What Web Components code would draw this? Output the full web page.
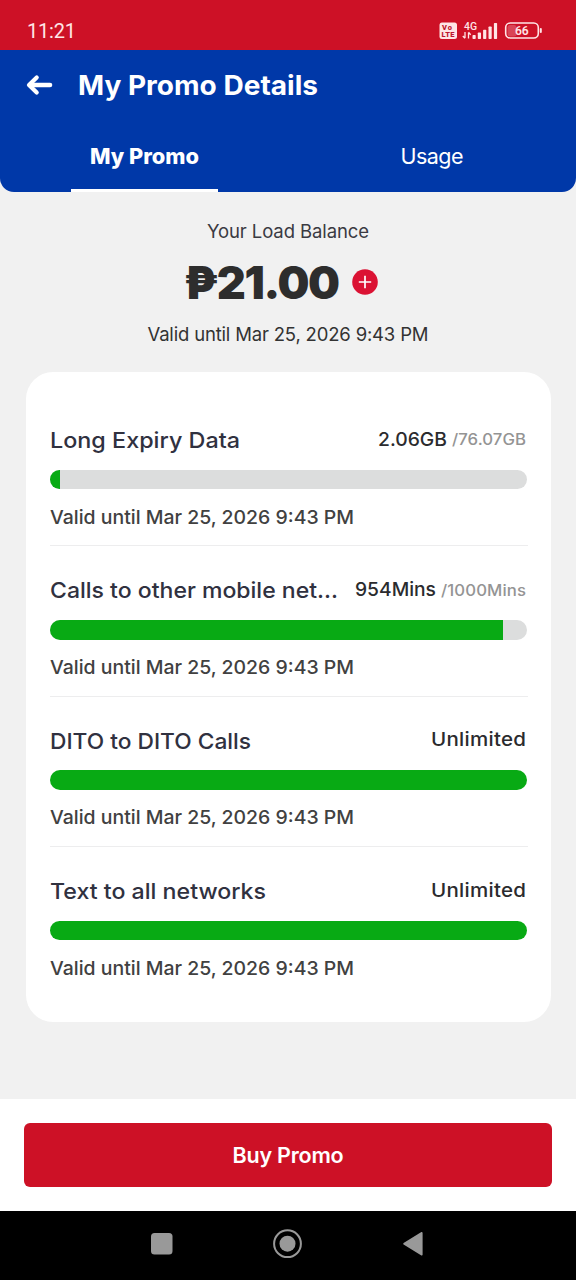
<!DOCTYPE html>
<html lang="en">
<head>
<meta charset="utf-8">
<title>My Promo Details</title>
<style>
html,body{margin:0;height:100%}
body{background:#f1f1f1;font-family:"Inter","Liberation Sans",sans-serif}
</style>
</head>
<body>
<promo-app></promo-app>
<script>
const define = (name, html, init) => customElements.define(name, class extends HTMLElement {
  connectedCallback() {
    if (this.shadowRoot) return;
    const t = document.createElement('template');
    t.innerHTML = typeof html === 'function' ? html(this) : html;
    this.attachShadow({mode: 'open'}).append(t.content.cloneNode(true));
    if (init) init(this);
  }
});

// Text label whose line fills the given width: glyphs widen by up to 8%, tracking takes the rest.
define('fit-text', `<style>
:host{display:block;flex:none;white-space:nowrap;line-height:1.2}
span{display:inline-block;transform-origin:0 50%}
</style><span></span>`, el => {
  const s = el.shadowRoot.querySelector('span');
  s.textContent = el.getAttribute('text');
  const target = +el.getAttribute('w');
  el.style.width = target + 'px';
  const n = s.textContent.length - 1;
  const natural = s.getBoundingClientRect().width;
  const k = Math.min(1.08, Math.max(1, target / natural));
  s.style.letterSpacing = (target / k - natural) / n + 'px';
  s.style.transform = `scaleX(${k})`;
});

define('status-bar', `<style>
:host{display:flex;height:50px;box-sizing:border-box;padding:12px 33px 0 27px;background:#cd1126;justify-content:space-between;color:#ffe5e6;font-family:Roboto,sans-serif}
fit-text{font-size:20px;line-height:39px}
svg{display:block;margin-top:7px}
</style>
<fit-text text="11:21" w="49"></fit-text>
<svg width="105" height="24" viewBox="438.5 19 105 24" fill="#ffe5e6" font-family="Roboto">
<rect x="440" y="22.5" width="17.5" height="16.5" rx="2.5"/>
<text x="442.5" y="30.2" font-size="7.5" font-weight="900" fill="#bd1730" textLength="10">Vo</text>
<text x="442" y="37.4" font-size="7.5" font-weight="900" fill="#bd1730" textLength="13">LTE</text>
<text x="464.5" y="29.8" font-size="10" font-weight="500" textLength="13" lengthAdjust="spacingAndGlyphs">4G</text>
<path d="M465.5 32v6M463.3 36l2.2 2.4M469 38.5v-6M469 32.3l2.2 2.4" stroke="#ffe5e6" stroke-width="1.3" fill="none"/>
<rect x="473" y="35" width="3.2" height="4" rx=".7"/><rect x="478.3" y="32.5" width="3.2" height="6.5" rx=".7"/><rect x="483.6" y="29.7" width="3.2" height="9.3" rx=".7"/><rect x="489" y="26.5" width="3.2" height="12.5" rx=".7"/><rect x="494.4" y="23" width="3.2" height="16" rx=".7"/>
<rect x="508" y="25" width="9" height="11.5" rx="2.5" opacity=".25"/>
<rect x="506.2" y="23" width="32.6" height="15" rx="4.5" fill="none" stroke="#ffe5e6" stroke-width="1.6"/>
<rect x="540.3" y="28" width="2" height="5" rx="1"/>
<text x="515.5" y="35" font-size="12" font-weight="600" textLength="13.5">66</text>
</svg>`);

define('app-header', `<style>
:host{display:flex;flex-direction:column;height:142px;background:#0038a8;border-radius:0 0 14px 14px;color:#fff}
.t{display:flex;align-items:center;height:70px;padding-left:26px;gap:25px}
.t fit-text{font-size:27px;font-weight:700;padding-top:2px}
.tabs{display:grid;grid-template-columns:1fr 1fr;flex:1}
.tab{display:flex;justify-content:center;font-size:21.5px}
.tab fit-text{padding-top:24px}
.on{justify-self:center;width:147px;border-bottom:3px solid #fff;box-sizing:border-box;font-weight:800}
svg{display:block}
</style>
<div class="t"><svg width="27" height="24" viewBox="0 0 27 24" fill="none" stroke="#fff" stroke-width="4.6" stroke-linecap="round" stroke-linejoin="round"><path d="M4 12H24"/><path d="M10.7 4.5 3 12l7.7 7.5" stroke-width="4.2"/></svg>
<fit-text text="My Promo Details" w="240"></fit-text></div>
<div class="tabs"><div class="tab on"><fit-text text="My Promo" w="109"></fit-text></div><div class="tab"><fit-text text="Usage" w="63"></fit-text></div></div>`);

define('load-balance', `<style>
:host{display:flex;flex-direction:column;align-items:center;height:180px;color:#3a3a42;font-size:18.5px}
.a{padding-top:28px}
.m{display:flex;align-items:center;height:60px;margin-top:9px;gap:12px;width:208px;margin-right:14px;box-sizing:border-box;padding-left:7px;color:#2d2d2d}
.m fit-text{font-size:45px;font-weight:900;padding-top:4px}
.m svg{display:block;margin-top:1px}
.v{color:#333;margin-top:12px}
</style>
<fit-text class="a" text="Your Load Balance" w="162"></fit-text>
<div class="m"><fit-text text="₱21.00" w="156"></fit-text><svg width="26" height="26" viewBox="0 0 26 26"><circle cx="13" cy="13" r="12.8" fill="#db1233"/><path d="M6.8 13h12.4M13 6.8v12.4" stroke="#fff" stroke-width="1.7"/></svg></div>
<fit-text class="v" text="Valid until Mar 25, 2026 9:43 PM" w="281"></fit-text>`);

define('usage-row', el => {
  const g = k => el.getAttribute(k);
  return `<style>
:host{display:block;height:150.4px;box-sizing:border-box;padding-top:28px;border-bottom:1.5px solid #ededee}
:host([last]){border-color:transparent}
.h{display:flex;align-items:center;height:32px;color:#30313f;padding-right:2px}
.n{font-size:22px;font-weight:500;margin-right:auto;margin-left:-.5px}
.u{font-size:19px;font-weight:550;color:#2b2b2e}
.o{font-size:15.5px;font-weight:550;color:#949494;margin-left:5px;padding-top:1px}
.b{height:19.5px;margin:13.7px 1px 0 -.5px;border-radius:10px;background:#dcdddd;overflow:hidden}
.b div{height:100%;background:#08aa14;width:${g('fill')}}
.v{font-size:19px;font-weight:500;color:#414141;margin:17.5px 0 0 -.5px}
</style>
<div class="h"><fit-text class="n" text="${g('name')}" w="${g('nw')}"></fit-text><fit-text class="u" text="${g('used')}" w="${g('uw')}"></fit-text>${g('of') ? `<fit-text class="o" text="${g('of')}" w="${g('ow')}"></fit-text>` : ''}</div>
<div class="b"><div></div></div>
<fit-text class="v" text="Valid until Mar 25, 2026 9:43 PM" w="304"></fit-text>`;
});

define('promo-card', `<style>
:host{display:block;box-sizing:border-box;height:650px;margin:0 25.5px;padding:24px 23px 0 24.5px;background:#fff;border-radius:27px}
</style><slot></slot>`);

define('buy-bar', `<style>
:host{display:block;background:#fff;height:112px;box-sizing:border-box;padding:23.5px 24px 0}
button{display:flex;align-items:center;justify-content:center;width:100%;height:64px;border:0;border-radius:6px;background:#cd1126;color:#fff;font:600 21.5px Inter,sans-serif;padding:2px 0 0}
</style><button><fit-text text="Buy Promo" w="111"></fit-text></button>`);

define('nav-bar', `<style>
:host{display:flex;height:69px;background:#000}
svg{display:block}
</style><svg width="576" height="69" viewBox="0 1211 576 69" fill="#999"><rect x="151" y="1233" width="21.5" height="21.5" rx="3.5"/><circle cx="287.5" cy="1243.7" r="13.4" fill="none" stroke="#999" stroke-width="2"/><circle cx="287.5" cy="1243.7" r="8"/><path d="M404 1243.8 421.8 1232.8V1254.8Z" stroke="#999" stroke-width="1.6" stroke-linejoin="round"/></svg>`);

define('promo-app', `<style>
:host{display:flex;flex-direction:column;width:576px;height:1280px;background:#f1f1f1;overflow:hidden}
:host>*{flex:none}
buy-bar{margin-top:auto}
</style>
<status-bar></status-bar><app-header></app-header><load-balance></load-balance>
<promo-card>
<usage-row name="Long Expiry Data" nw="190" used="2.06GB" uw="69" of="/76.07GB" ow="74" fill="2.1%"></usage-row>
<usage-row name="Calls to other mobile net..." nw="288" used="954Mins" uw="81" of="/1000Mins" ow="85" fill="95.1%"></usage-row>
<usage-row name="DITO to DITO Calls" nw="201" used="Unlimited" uw="95" fill="100%"></usage-row>
<usage-row name="Text to all networks" nw="216" used="Unlimited" uw="95" fill="100%" last></usage-row>
</promo-card>
<buy-bar></buy-bar><nav-bar></nav-bar>`);
</script>
</body>
</html>
